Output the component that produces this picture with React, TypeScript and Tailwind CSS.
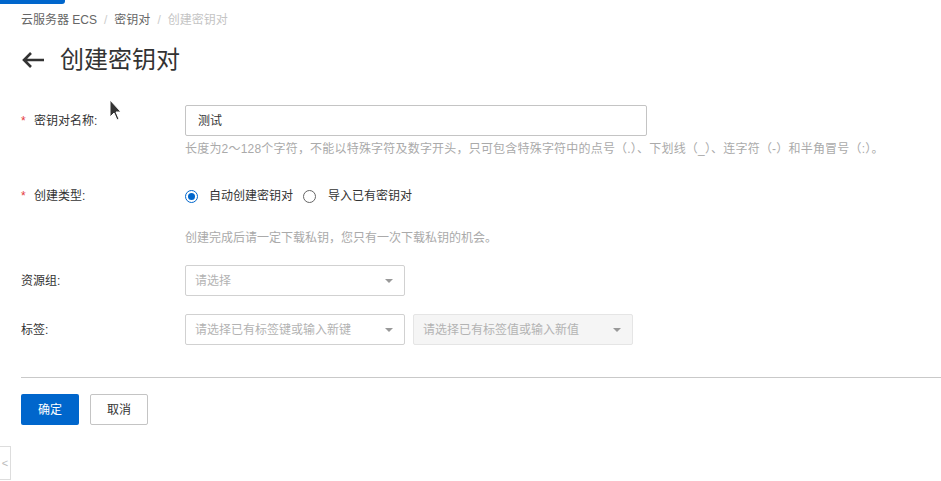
import React from 'react';

const FONT = "font-['Liberation_Sans','Noto_Sans_CJK_SC',sans-serif]";

function Caret({ className = '' }: { className?: string }) {
  return (
    <svg width="8" height="4" viewBox="0 0 8 4" className={className}>
      <path d="M0 0h8L4 4z" fill="#999" />
    </svg>
  );
}

function Select({ placeholder, disabled, width }: { placeholder: string; disabled?: boolean; width: string }) {
  return (
    <div
      className={`${width} h-[31px] flex items-center justify-between pl-[9px] pr-[11px] border rounded-[2px] ${
        disabled ? 'bg-[#f5f5f5] border-[#e5e5e5]' : 'bg-white border-[#d1d1d1]'
      }`}
    >
      <span className="text-[#b3b3b3] text-[12px]">{placeholder}</span>
      <Caret />
    </div>
  );
}

function Label({ text, required, height = 'h-[31px]' }: { text: string; required?: boolean; height?: string }) {
  return (
    <div className={`w-[164px] ${height} shrink-0 self-start flex items-center text-[12px] text-[#333]`}>
      {required ? <span className="text-[#e4393c] w-[13px]">*</span> : null}
      <span>{text}</span>
    </div>
  );
}

export default function App() {
  return (
    <div className={`relative min-h-screen bg-white ${FONT} text-[12px] text-[#333]`}>
      {/* top progress bar */}
      <div className="h-1 w-[65px] bg-[#0066cc] rounded-br-[3px]" />

      <div className="pl-[21px] pt-2">
        {/* breadcrumb */}
        <div className="flex items-center h-4 leading-4 text-[12px]">
          <span className="text-[#666]">云服务器 ECS</span>
          <span className="mx-[7px] text-[#ccc]">/</span>
          <span className="text-[#666]">密钥对</span>
          <span className="mx-[7px] text-[#ccc]">/</span>
          <span className="text-[#c4c4c4]">创建密钥对</span>
        </div>

        {/* title */}
        <div className="mt-4 h-8 flex items-center">
          <svg width="24" height="18" viewBox="0 0 24 18" className="mr-[15px]">
            <path d="M23 9H3M10 2L3 9l7 7" fill="none" stroke="#333" strokeWidth="2.6" />
          </svg>
          <h1 className="text-[24px] leading-8 text-[#333] font-normal">创建密钥对</h1>
        </div>

        {/* name */}
        <div className="mt-[29px] flex">
          <Label text="密钥对名称:" required />
          <div>
            <div className="w-[462px] h-[31px] flex items-center pl-3 border border-[#c4c4c4] rounded-[2px] text-[12px] text-[#333]">
              测试
            </div>
            <p className="mt-[5px] leading-4 text-[12px] text-[#aaa] tracking-[0.2px]">
              长度为2～128个字符，不能以特殊字符及数字开头，只可包含特殊字符中的点号（.）、下划线（_）、连字符（-）和半角冒号（:）。
            </p>
          </div>
        </div>

        {/* type */}
        <div className="mt-[29px] flex">
          <Label text="创建类型:" required height="h-5" />
          <div>
            <div className="h-5 flex items-center">
              <span className="w-[13px] h-[13px] rounded-full border border-[#0066cc] flex items-center justify-center">
                <span className="w-[7px] h-[7px] rounded-full bg-[#0066cc]" />
              </span>
              <span className="ml-[11px] text-[#333]">自动创建密钥对</span>
              <span className="ml-[10px] w-[13px] h-[13px] rounded-full border border-[#666]" />
              <span className="ml-[12px] text-[#333]">导入已有密钥对</span>
            </div>
            <p className="mt-6 leading-4 text-[12px] text-[#aaa]">创建完成后请一定下载私钥，您只有一次下载私钥的机会。</p>
          </div>
        </div>

        {/* resource group */}
        <div className="mt-[19px] flex">
          <Label text="资源组:" />
          <Select placeholder="请选择" width="w-[220px]" />
        </div>

        {/* tags */}
        <div className="mt-[18px] flex">
          <Label text="标签:" />
          <div className="flex gap-[8px]">
            <Select placeholder="请选择已有标签键或输入新键" width="w-[220px]" />
            <Select placeholder="请选择已有标签值或输入新值" width="w-[220px]" disabled />
          </div>
        </div>

        <div className="mt-8 border-t border-[#c9c9c9]" />

        {/* actions */}
        <div className="mt-4 flex gap-[11px]">
          <button className="w-[58px] h-[31px] bg-[#0066cc] text-white text-[12px] rounded-[2px]">确定</button>
          <button className="w-[58px] h-[31px] bg-white border border-[#c4c4c4] text-[#333] text-[12px] rounded-[2px]">取消</button>
        </div>
      </div>

      {/* side collapse tab */}
      <div className="absolute left-0 top-[446px] w-[11px] h-[34px] border border-l-0 border-[#ddd] flex items-center justify-center text-[#bbb] text-[11px]">
        &lt;
      </div>

      {/* mouse pointer */}
      <svg width="14" height="22" viewBox="0 0 14 22" className="absolute left-[109px] top-[99px]">
        <path d="M1 1v17l4-4 3 7 2-1-3-7h5z" fill="#333" stroke="#fff" strokeWidth="1" />
      </svg>
    </div>
  );
}
